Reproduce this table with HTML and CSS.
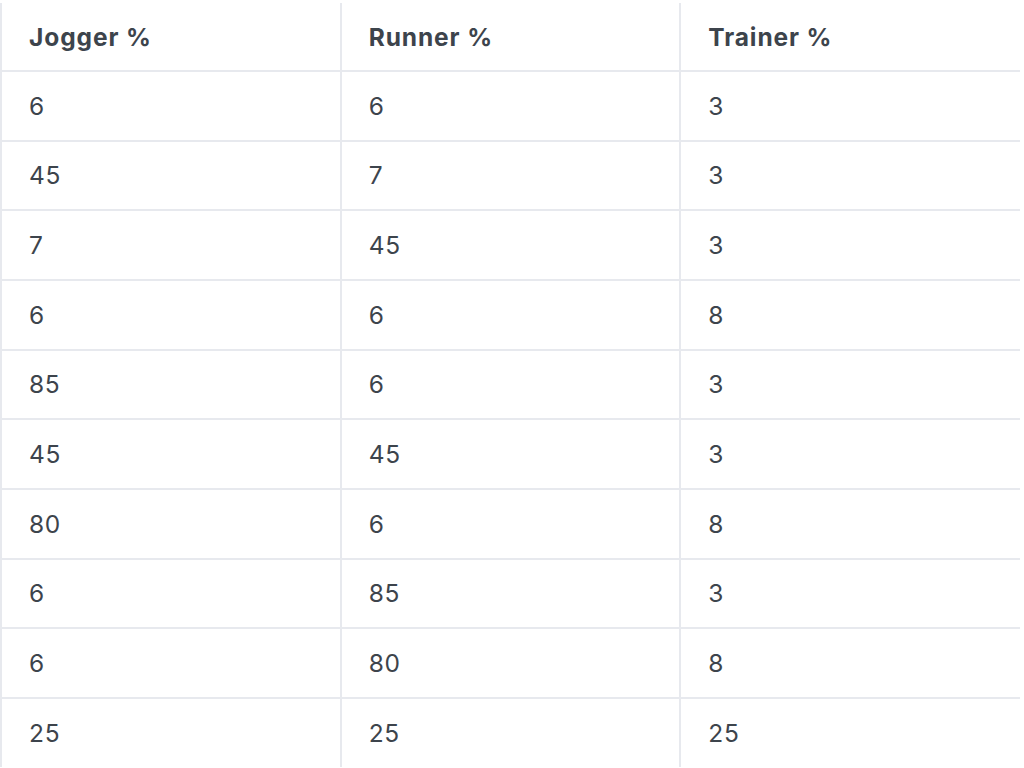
FILE: index.html
```html
<!DOCTYPE html>
<html>
<head>
<meta charset="utf-8">
<link rel="stylesheet" href="styles.css">
</head>
<body>
<div class="wrap">
<table class="data">
<thead>
<tr><th>Jogger %</th><th>Runner %</th><th>Trainer %</th></tr>
</thead>
<tbody>
<tr><td>6</td><td>6</td><td>3</td></tr>
<tr><td>45</td><td>7</td><td>3</td></tr>
<tr><td>7</td><td>45</td><td>3</td></tr>
<tr><td>6</td><td>6</td><td>8</td></tr>
<tr><td>85</td><td>6</td><td>3</td></tr>
<tr><td>45</td><td>45</td><td>3</td></tr>
<tr><td>80</td><td>6</td><td>8</td></tr>
<tr><td>6</td><td>85</td><td>3</td></tr>
<tr><td>6</td><td>80</td><td>8</td></tr>
<tr><td>25</td><td>25</td><td>25</td></tr>
</tbody>
</table>
</div>
</body>
</html>
```
FILE: styles.css
```css
html, body {
  margin: 0;
  padding: 0;
  background: #ffffff;
}
.wrap {
  padding-top: 3px;
  width: 1020px;
}
.data {
  width: 1020px;
  border-collapse: collapse;
  table-layout: fixed;
  font-family: Inter, "Noto Sans", sans-serif;
  font-size: 24.5px;
  color: #3d444c;
}
.data th,
.data td {
  text-align: left;
  padding: 0 0 0 27px;
  height: 67.67px;
  line-height: 34px;
  border-left: 2px solid #e7e9ee;
  border-bottom: 2px solid #e7e9ee;
  vertical-align: middle;
}
.data th {
  font-weight: 700;
  height: 67px;
  letter-spacing: 0.9px;
}
.data td {
  font-weight: 400;
  letter-spacing: 0.7px;
}
.data tbody tr:last-child td {
  border-bottom: none;
}
```
